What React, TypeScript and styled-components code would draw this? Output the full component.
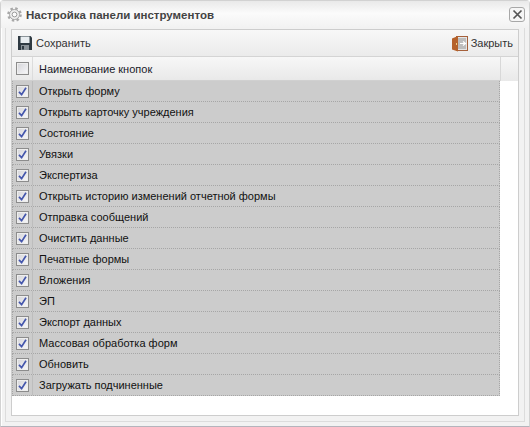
import React from 'react';
import styled, { createGlobalStyle } from 'styled-components';

const GlobalStyle = createGlobalStyle`
  html, body {
    margin: 0;
    padding: 0;
    background: #fff;
  }
`;

const Window = styled.div`
  box-sizing: border-box;
  width: 530px;
  height: 427px;
  display: flex;
  flex-direction: column;
  padding: 0 4px 4px;
  background: #f2f2f2;
  border: 1px solid #d2d2d2;
  border-bottom-color: #b4b4bc;
  border-radius: 4px 4px 0 0;
  box-shadow: inset 1px 1px 0 #fff;
  font-family: 'Liberation Sans', Arial, sans-serif;
  font-size: 11px;
  color: #111;
`;

const TitleBar = styled.div`
  height: 27px;
  flex: none;
  display: flex;
  align-items: center;
  margin: 0 -4px;
  padding: 0 4px 0 6px;
  background: linear-gradient(#e9e9e9, #fbfbfb 45%, #f2f2f2);
`;

const Title = styled.h1`
  flex: 1;
  margin: 0 0 0 4px;
  font-size: 11.5px;
  font-weight: bold;
  color: #444;
`;

const CloseButton = styled.button`
  box-sizing: border-box;
  width: 16px;
  height: 15px;
  padding: 0;
  display: flex;
  align-items: center;
  justify-content: center;
  background: #f6f6f6;
  border: 1px solid #a8a8a8;
  border-radius: 3px;
`;

const Frame = styled.div`
  flex: 1;
  min-height: 0;
  display: flex;
  flex-direction: column;
  padding: 1px 5px 5px;
  border: 1px solid #dcdcdc;
  border-top: 0;
`;

const Body = styled.div`
  flex: 1;
  display: flex;
  flex-direction: column;
  background: #fff;
  border: 1px solid #cdcdcd;
`;

const Toolbar = styled.div`
  height: 26px;
  flex: none;
  display: flex;
  align-items: center;
  justify-content: space-between;
  padding: 0 5px;
  background: linear-gradient(#f8f8f8, #ebebeb);
  border-bottom: 1px solid #d4d4d4;
`;

const ToolButton = styled.div`
  display: flex;
  align-items: center;
  gap: 3px;
  color: #333;
`;

const Table = styled.div`
  display: grid;
  grid-template-columns: 1fr 18px;
  grid-template-rows: 24px auto;
`;

const HeaderRow = styled.div`
  display: flex;
  background: linear-gradient(#f7f7f7, #e9e9e9);
  border-bottom: 1px solid #d0d0d0;
`;

const HeaderSpacer = styled.div`
  background: linear-gradient(#f7f7f7, #e9e9e9);
  border-left: 1px solid #d8d8d8;
`;

const Rows = styled.div`
  grid-column: 1;
`;

const Row = styled.div`
  box-sizing: border-box;
  height: 21px;
  display: flex;
  background: #cccccc;
  border-bottom: 1px dotted #a6a6a6;
  border-left: 1px dotted #a6a6a6;
  border-right: 1px dotted #a6a6a6;
`;

const CheckCell = styled.div<{ $header?: boolean }>`
  box-sizing: border-box;
  width: ${({ $header }) => ($header ? '21px' : '20px')};
  flex: none;
  display: flex;
  align-items: center;
  justify-content: center;
  padding-left: ${({ $header }) => ($header ? '0' : '0')};
  padding-right: ${({ $header }) => ($header ? '0' : '1px')};
  border-right: 1px solid ${({ $header }) => ($header ? '#dcdcdc' : '#bdbdbd')};
`;

const NameCell = styled.div<{ $header?: boolean }>`
  display: flex;
  align-items: center;
  padding-left: 6px;
  color: ${({ $header }) => ($header ? '#1a1a2a' : '#111')};
`;

const Box = styled.span`
  box-sizing: border-box;
  width: 13px;
  height: 13px;
  display: flex;
  align-items: center;
  justify-content: center;
  background: linear-gradient(135deg, #d4d4d8, #f8f8fa);
  border: 1px solid #8c8c8c;
  box-shadow: inset 0 0 0 1px #eeeeee;
`;

const buttons = [
  'Открыть форму',
  'Открыть карточку учреждения',
  'Состояние',
  'Увязки',
  'Экспертиза',
  'Открыть историю изменений отчетной формы',
  'Отправка сообщений',
  'Очистить данные',
  'Печатные формы',
  'Вложения',
  'ЭП',
  'Экспорт данных',
  'Массовая обработка форм',
  'Обновить',
  'Загружать подчиненные',
];

function GearIcon() {
  return (
    <svg width="15" height="15" viewBox="0 0 15 15">
      <circle cx="7.5" cy="7.5" r="6" fill="none" stroke="#a8a8a8" strokeWidth="2.6" strokeDasharray="2.4 2.31" />
      <circle cx="7.5" cy="7.5" r="5" fill="#efefef" stroke="#a6a6a6" strokeWidth="1" />
      <circle cx="7.5" cy="7.5" r="2.4" fill="#fbfbfb" stroke="#9a9a9a" strokeWidth="1" />
    </svg>
  );
}

function CloseIcon() {
  return (
    <svg width="11" height="11" viewBox="0 0 11 11">
      <path d="M1.5 1.5 L9.5 9.5 M9.5 1.5 L1.5 9.5" stroke="#555" strokeWidth="1.7" />
    </svg>
  );
}

function SaveIcon() {
  return (
    <svg width="16" height="16" viewBox="0 0 16 16">
      <path d="M1 1 H13.5 L15 2.5 V15 H1 Z" fill="#2f3a42" />
      <rect x="3.5" y="1.5" width="9" height="6.5" fill="#e8edf0" />
      <rect x="4" y="10" width="8" height="5" fill="#8a9298" />
      <rect x="5" y="11" width="2" height="3.5" fill="#2f3a42" />
    </svg>
  );
}

function DoorIcon() {
  return (
    <svg width="16" height="17" viewBox="1 0 16 17">
      <rect x="5.5" y="1.5" width="11" height="14" fill="#e6e6e6" stroke="#a5603a" />
      <rect x="7" y="3" width="8" height="11" fill="#bdbdbd" />
      <path d="M9 8.5 H14 M12 6.5 L14.5 8.5 L12 10.5" stroke="#fff" strokeWidth="1.2" fill="none" />
      <path d="M1 3.5 L7 1 V16.5 L1 14.5 Z" fill="#b5622c" />
      <rect x="5" y="8" width="1" height="2" fill="#f0d080" />
    </svg>
  );
}

function Check() {
  return (
    <svg width="9" height="9" viewBox="0 0 9 9">
      <path d="M1 4.8 L3.6 7.6 L8 0.8" stroke="#4456ac" strokeWidth="1.7" fill="none" />
    </svg>
  );
}

export default function App() {
  return (
    <>
      <GlobalStyle />
      <Window>
        <TitleBar>
          <GearIcon />
          <Title>Настройка панели инструментов</Title>
          <CloseButton aria-label="Закрыть">
            <CloseIcon />
          </CloseButton>
        </TitleBar>
        <Frame>
          <Body>
            <Toolbar>
              <ToolButton>
                <SaveIcon />
                Сохранить
              </ToolButton>
              <ToolButton>
                <DoorIcon />
                Закрыть
              </ToolButton>
            </Toolbar>
            <Table>
              <HeaderRow>
                <CheckCell $header>
                  <Box />
                </CheckCell>
                <NameCell $header>Наименование кнопок</NameCell>
              </HeaderRow>
              <HeaderSpacer />
              <Rows>
                {buttons.map((name) => (
                  <Row key={name}>
                    <CheckCell>
                      <Box>
                        <Check />
                      </Box>
                    </CheckCell>
                    <NameCell>{name}</NameCell>
                  </Row>
                ))}
              </Rows>
            </Table>
          </Body>
        </Frame>
      </Window>
    </>
  );
}
